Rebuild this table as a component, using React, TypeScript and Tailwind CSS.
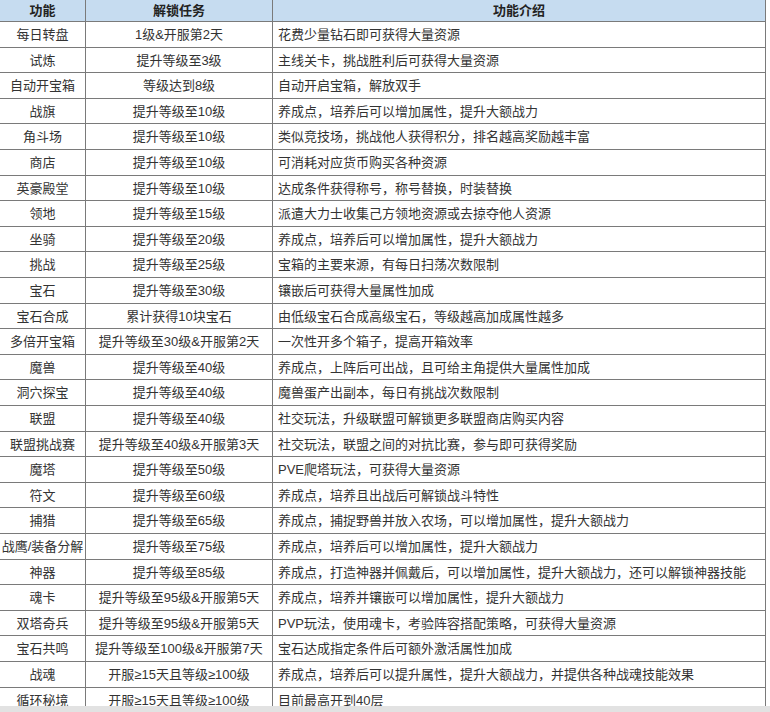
import React from "react";

const rows: [string, string, string][] = [
  ["每日转盘", "1级&开服第2天", "花费少量钻石即可获得大量资源"],
  ["试炼", "提升等级至3级", "主线关卡，挑战胜利后可获得大量资源"],
  ["自动开宝箱", "等级达到8级", "自动开启宝箱，解放双手"],
  ["战旗", "提升等级至10级", "养成点，培养后可以增加属性，提升大额战力"],
  ["角斗场", "提升等级至10级", "类似竞技场，挑战他人获得积分，排名越高奖励越丰富"],
  ["商店", "提升等级至10级", "可消耗对应货币购买各种资源"],
  ["英豪殿堂", "提升等级至10级", "达成条件获得称号，称号替换，时装替换"],
  ["领地", "提升等级至15级", "派遣大力士收集己方领地资源或去掠夺他人资源"],
  ["坐骑", "提升等级至20级", "养成点，培养后可以增加属性，提升大额战力"],
  ["挑战", "提升等级至25级", "宝箱的主要来源，有每日扫荡次数限制"],
  ["宝石", "提升等级至30级", "镶嵌后可获得大量属性加成"],
  ["宝石合成", "累计获得10块宝石", "由低级宝石合成高级宝石，等级越高加成属性越多"],
  ["多倍开宝箱", "提升等级至30级&开服第2天", "一次性开多个箱子，提高开箱效率"],
  ["魔兽", "提升等级至40级", "养成点，上阵后可出战，且可给主角提供大量属性加成"],
  ["洞穴探宝", "提升等级至40级", "魔兽蛋产出副本，每日有挑战次数限制"],
  ["联盟", "提升等级至40级", "社交玩法，升级联盟可解锁更多联盟商店购买内容"],
  ["联盟挑战赛", "提升等级至40级&开服第3天", "社交玩法，联盟之间的对抗比赛，参与即可获得奖励"],
  ["魔塔", "提升等级至50级", "PVE爬塔玩法，可获得大量资源"],
  ["符文", "提升等级至60级", "养成点，培养且出战后可解锁战斗特性"],
  ["捕猎", "提升等级至65级", "养成点，捕捉野兽并放入农场，可以增加属性，提升大额战力"],
  ["战鹰/装备分解", "提升等级至75级", "养成点，培养后可以增加属性，提升大额战力"],
  ["神器", "提升等级至85级", "养成点，打造神器并佩戴后，可以增加属性，提升大额战力，还可以解锁神器技能"],
  ["魂卡", "提升等级至95级&开服第5天", "养成点，培养并镶嵌可以增加属性，提升大额战力"],
  ["双塔奇兵", "提升等级至95级&开服第5天", "PVP玩法，使用魂卡，考验阵容搭配策略，可获得大量资源"],
  ["宝石共鸣", "提升等级至100级&开服第7天", "宝石达成指定条件后可额外激活属性加成"],
  ["战魂", "开服≥15天且等级≥100级", "养成点，培养后可以提升属性，提升大额战力，并提供各种战魂技能效果"],
  ["循环秘境", "开服≥15天且等级≥100级", "目前最高开到40层"],
];

const heights = ["h-[26px]", "h-[25px]", "h-[26px]", "h-[25px]", "h-[26px]"];

export default function App() {
  return (
    <div
      className="w-[770px] h-[712px] bg-white flex flex-col overflow-hidden text-[#333]"
      style={{ fontFamily: '"Liberation Sans", "Noto Sans CJK SC", sans-serif' }}
    >
      <div className="h-[706px] overflow-hidden">
        <div className="w-[766px] flex flex-col">
          <div className="grid grid-cols-[86px_187px_493px] h-[22px] bg-[#c6dcf0] border-b border-[#7a7a7a] text-[13px] font-bold text-[#222]">
            <div className="flex items-center justify-center border-r border-[#7a7a7a]">功能</div>
            <div className="flex items-center justify-center border-r border-[#7a7a7a]">解锁任务</div>
            <div className="flex items-center justify-center border-r border-[#7a7a7a]">功能介绍</div>
          </div>
          {rows.map((r, i) => (
            <div
              key={i}
              className={`grid grid-cols-[86px_187px_493px] ${heights[i % 5]} border-b border-[#7a7a7a] text-[13px] leading-none`}
            >
              <div className="flex items-center justify-center border-r border-[#7a7a7a] whitespace-nowrap">{r[0]}</div>
              <div className="flex items-center justify-center border-r border-[#7a7a7a] whitespace-nowrap">{r[1]}</div>
              <div className="flex items-center pl-[5px] border-r border-[#7a7a7a] whitespace-nowrap">{r[2]}</div>
            </div>
          ))}
        </div>
      </div>
      <div className="h-[6px] bg-[#e2e2e2]" />
    </div>
  );
}
